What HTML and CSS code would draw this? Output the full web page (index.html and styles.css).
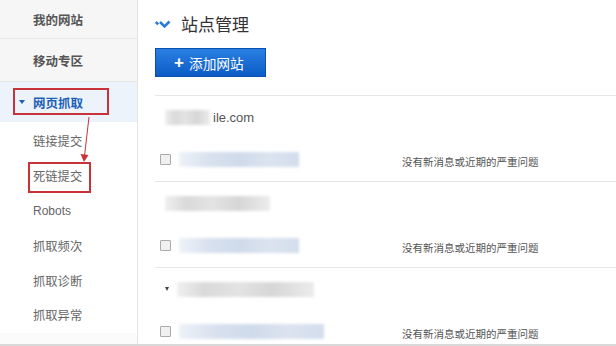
FILE: index.html
```html
<!DOCTYPE html>
<html lang="zh-CN">
<head>
<meta charset="utf-8">
<title>站点管理</title>
<link rel="stylesheet" href="styles.css">
</head>
<body>
<div class="page">
  <aside class="sidebar">
    <div class="nav-item first">我的网站</div>
    <div class="nav-item second">移动专区</div>
    <div class="nav-item active"><span class="caret"></span>网页抓取</div>
    <ul class="sub-list">
      <li class="sub-item">链接提交</li>
      <li class="sub-item">死链提交</li>
      <li class="sub-item latin">Robots</li>
      <li class="sub-item">抓取频次</li>
      <li class="sub-item">抓取诊断</li>
      <li class="sub-item">抓取异常</li>
    </ul>
    <div class="mark mark-main"></div>
    <div class="mark mark-sub"></div>
    <svg class="arrow" width="20" height="50" viewBox="0 0 20 50">
      <line x1="11" y1="1" x2="6.5" y2="40" stroke="#c8333a" stroke-width="1"/>
      <polygon points="2.5,38 10.5,39 6,46" fill="#c8333a"/>
    </svg>
  </aside>
  <main class="main">
    <h1 class="title">
      <svg class="chev" width="16" height="10" viewBox="0 0 16 10">
        <path d="M0.8 3 L3.2 5.4" fill="none" stroke="#2b7bd6" stroke-width="2.6"/>
        <path d="M5 3 L9.5 7.5 L14.5 2.5" fill="none" stroke="#2b7bd6" stroke-width="2.6"/>
      </svg>
      站点管理
    </h1>
    <button class="add-btn"><span class="plus">+</span>添加网站</button>
    <div class="site-list">
      <div class="site-row">
        <div class="domain"><span class="blur blur-gray w45"></span><span class="dom-text">ile.com</span></div>
        <div class="check-line">
          <div class="check-left">
            <span class="checkbox"></span>
            <span class="blur blur-blue w120"></span>
          </div>
          <span class="msg">没有新消息或近期的严重问题</span>
        </div>
      </div>
      <div class="site-row">
        <div class="domain"><span class="blur blur-gray w105"></span></div>
        <div class="check-line">
          <div class="check-left">
            <span class="checkbox"></span>
            <span class="blur blur-blue w120"></span>
          </div>
          <span class="msg">没有新消息或近期的严重问题</span>
        </div>
      </div>
      <div class="site-row last">
        <div class="domain"><span class="tri"></span><span class="blur blur-gray w140"></span></div>
        <div class="check-line">
          <div class="check-left">
            <span class="checkbox"></span>
            <span class="blur blur-blue w145"></span>
          </div>
          <span class="msg">没有新消息或近期的严重问题</span>
        </div>
      </div>
    </div>
  </main>
</div>
</body>
</html>
```

FILE: styles.css
```css
html, body {
  margin: 0;
  padding: 0;
  background: #ffffff;
}
body {
  font-family: "Noto Sans CJK SC", "Liberation Sans", sans-serif;
  color: #333;
  width: 616px;
  height: 346px;
  overflow: hidden;
}
.page {
  display: flex;
  height: 346px;
  border-bottom: 2px solid #d9d9d9;
  box-sizing: border-box;
}
.sidebar {
  position: relative;
  width: 137px;
  flex: none;
  background: #fbfbfb;
  border-right: 1px solid #e4e4e4;
}
.nav-item {
  display: flex;
  align-items: center;
  padding-left: 33px;
  font-size: 12.5px;
  font-weight: bold;
  color: #555;
  background: #f6f6f6;
  border-bottom: 1px solid #e6e6e6;
  box-sizing: border-box;
}
.nav-item.first { height: 39px; }
.nav-item.second { height: 43px; }
.nav-item.active {
  height: 40px;
  background: #ecf3fb;
  color: #1d5fb6;
  border-bottom: none;
  padding-left: 19px;
}
.caret {
  width: 0;
  height: 0;
  border-left: 3px solid transparent;
  border-right: 3px solid transparent;
  border-top: 4px solid #1d5fb6;
  margin-right: 8px;
}
.sub-list {
  list-style: none;
  margin: 0;
  padding: 2px 0 0 0;
  background: #ffffff;
}
.sub-item {
  height: 34.8px;
  display: flex;
  align-items: center;
  padding-left: 33px;
  font-size: 12.3px;
  color: #666;
}
.sub-item.latin {
  font-family: "Liberation Sans", sans-serif;
  font-size: 12px;
}
.mark {
  position: absolute;
  border: 2px solid #c8333a;
  box-sizing: border-box;
}
.mark-main { left: 13px; top: 88px; width: 96px; height: 27px; }
.mark-sub { left: 28px; top: 162px; width: 63px; height: 31px; }
.arrow {
  position: absolute;
  left: 78px;
  top: 116px;
}
.main {
  flex: 1;
  padding-left: 17px;
}
.title {
  margin: 0;
  height: 47px;
  display: flex;
  align-items: center;
  font-size: 17px;
  font-weight: normal;
  color: #333;
  box-sizing: border-box;
}
.chev { margin-right: 10px; margin-top: 1px; }
.add-btn {
  display: flex;
  align-items: center;
  width: 111px;
  height: 29px;
  margin-top: 1px;
  padding: 0 0 0 18px;
  border: 1px solid #0b4fb0;
  background: linear-gradient(#2a80e2, #0c5bc5);
  color: #fff;
  font-family: "Noto Sans CJK SC", sans-serif;
  font-size: 13.7px;
  box-sizing: border-box;
}
.plus {
  font-family: "Liberation Sans", sans-serif;
  font-weight: bold;
  font-size: 17px;
  margin-right: 5px;
  line-height: 1;
}
.site-list {
  margin-top: 18px;
  border-top: 1px solid #e6e6e6;
}
.site-row {
  height: 86px;
  border-bottom: 1px solid #e6e6e6;
  box-sizing: border-box;
  padding-top: 12px;
}
.site-row.last { border-bottom: none; }
.domain {
  height: 18px;
  display: flex;
  align-items: center;
  padding-left: 10px;
}
.dom-text {
  font-family: "Liberation Sans", sans-serif;
  font-size: 13px;
  color: #555;
  margin-left: 3px;
}
.tri {
  width: 0;
  height: 0;
  border-left: 2.5px solid transparent;
  border-right: 2.5px solid transparent;
  border-top: 4px solid #444;
  margin-right: 8px;
}
.blur {
  display: inline-block;
  height: 15px;
  filter: blur(1.5px);
}
.blur-gray {
  background: linear-gradient(90deg, #f0f0f0 0%, #d9d9d9 20%, #e3e3e3 45%, #d6d6d6 70%, #ececec 100%);
}
.blur-blue {
  background: linear-gradient(90deg, #eef2f8 0%, #d8e1ee 25%, #cfdaea 50%, #dbe3ef 75%, #d3ddec 100%);
}
.w45 { width: 45px; }
.w105 { width: 105px; }
.w120 { width: 120px; }
.w140 { width: 137px; }
.w145 { width: 145px; }
.check-line {
  display: flex;
  align-items: center;
  margin-top: 25px;
  padding-left: 5px;
  height: 16px;
}
.check-left {
  width: 242px;
  flex: none;
  display: flex;
  align-items: center;
}
.checkbox {
  width: 9px;
  height: 9px;
  border: 1px solid #aaa;
  background: #f0f0f0;
  border-radius: 1px;
  margin-right: 8px;
  flex: none;
}
.msg {
  font-size: 10.5px;
  color: #555;
  margin-top: 4px;
}
```
